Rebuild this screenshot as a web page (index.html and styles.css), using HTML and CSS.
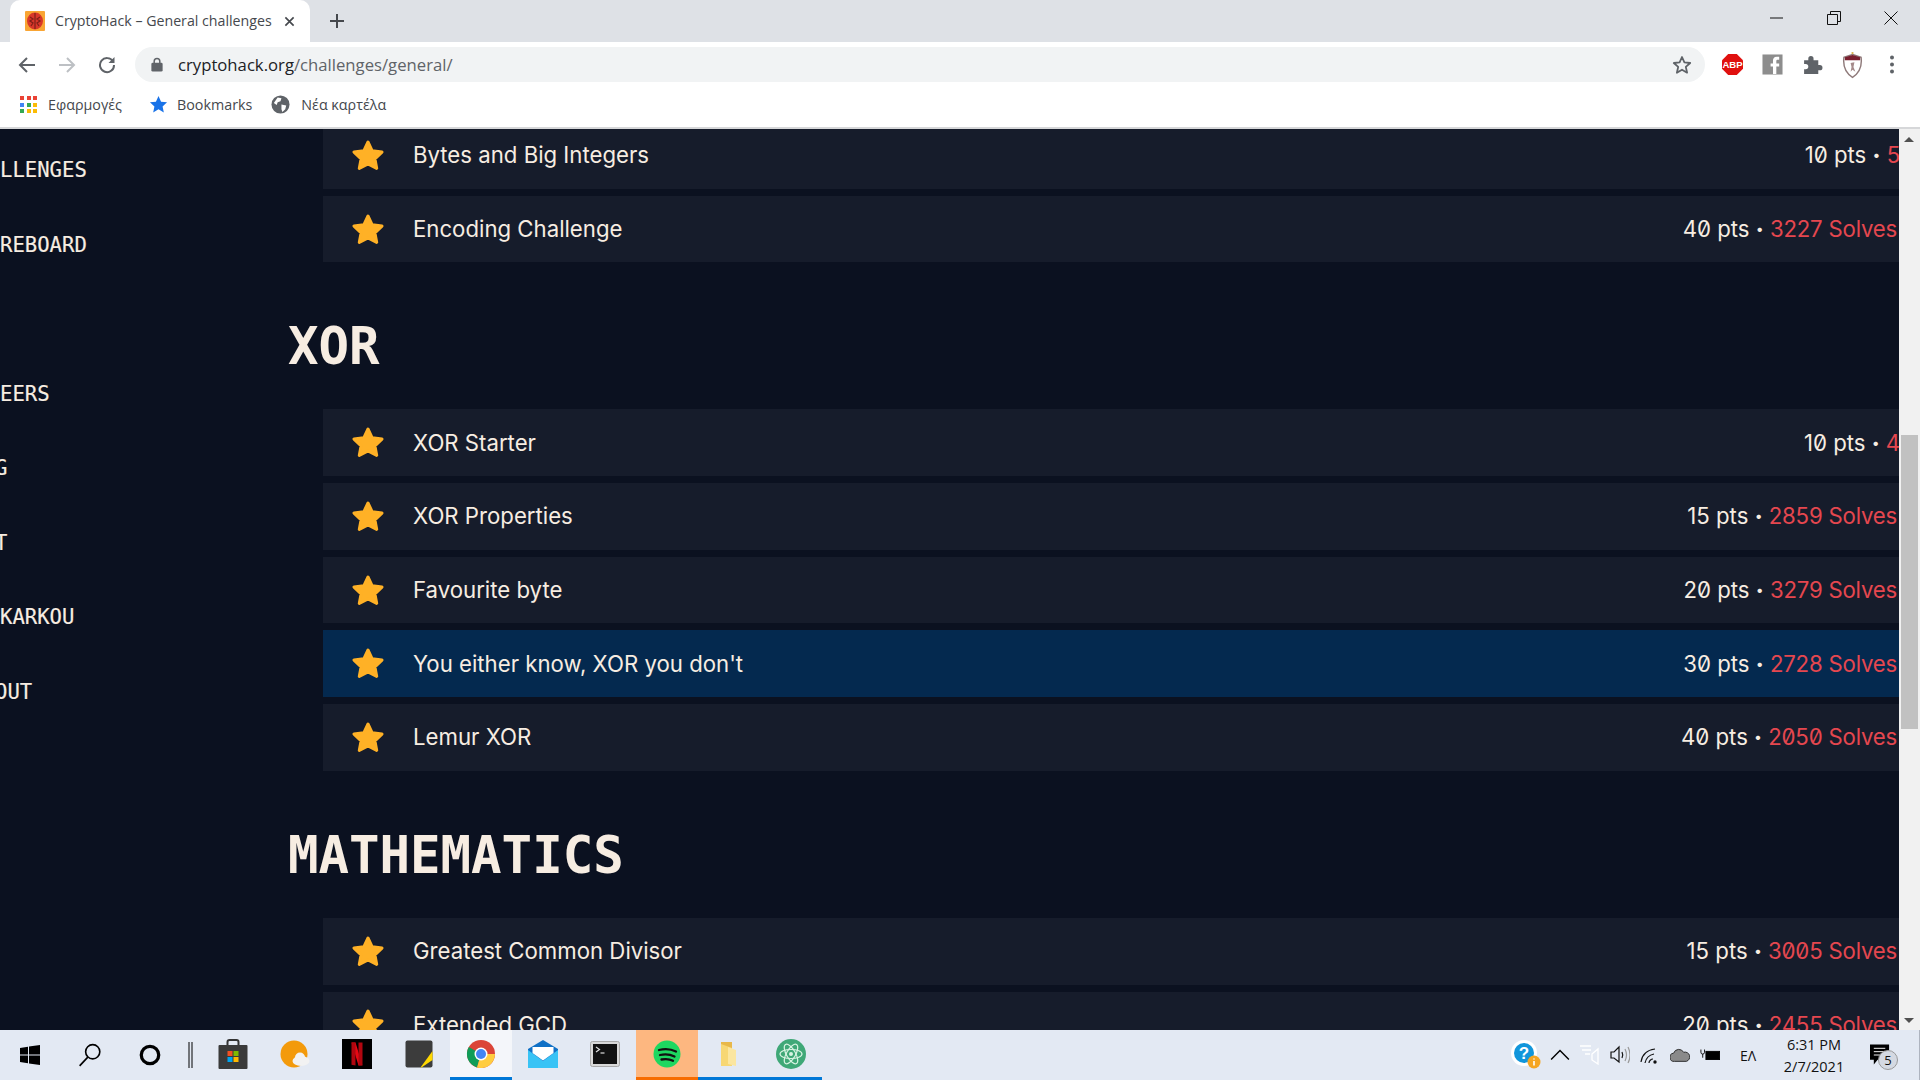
FILE: index.html
```html
<!DOCTYPE html>
<html lang="en">
<head>
    <meta charset="UTF-8">
    <meta name="viewport" content="width=device-width, initial-scale=1.0">
    <title>CryptoHack – General challenges</title>
    <link rel="stylesheet" href="styles.css">
</head>
<body>
    <svg class="defs" width="0" height="0">
        <symbol id="star" viewBox="0 0 32 30">
            <path d="M16 2 L20.2 10.8 L30 12.1 L22.9 18.8 L24.7 28.4 L16 23.8 L7.3 28.4 L9.1 18.8 L2 12.1 L11.8 10.8 Z" fill="#ffb126" stroke="#ffb126" stroke-width="3" stroke-linejoin="round"/>
        </symbol>
    </svg>

    <header class="browser">
        <div class="tabstrip">
            <div class="tab">
                <svg class="favicon" viewBox="0 0 20 20">
                    <rect width="20" height="20" rx="1" fill="#f9a534"/>
                    <ellipse cx="10" cy="10" rx="8" ry="8.5" fill="#d8372a"/>
                    <path d="M10 2v16M5 6l3 2-3 2 3 2-2 3M15 6l-3 2 3 2-3 2 2 3" stroke="#7d2018" stroke-width="1.2" fill="none"/>
                </svg>
                <span class="tab-title">CryptoHack – General challenges</span>
                <svg class="tab-close" viewBox="0 0 12 12"><path d="M1.5 1.5l9 9M10.5 1.5l-9 9" stroke="#45484d" stroke-width="1.8"/></svg>
            </div>
            <svg class="new-tab" viewBox="0 0 16 16"><path d="M8 1v14M1 8h14" stroke="#45484d" stroke-width="2"/></svg>
            <div class="window-btns">
                <svg viewBox="0 0 14 14"><path d="M0 7h13" stroke="#111" stroke-width="1"/></svg>
                <svg viewBox="0 0 14 14"><path d="M.5 3.5h10v10H.5zM3.5 3.5V.5h10v10h-3" fill="none" stroke="#111" stroke-width="1"/></svg>
                <svg viewBox="0 0 14 14"><path d="M.5.5l13 13M13.5.5l-13 13" stroke="#111" stroke-width="1"/></svg>
            </div>
        </div>

        <div class="toolbar">
            <svg class="nav-icon first" viewBox="0 0 18 18"><path d="M17 9H3M9 2L2 9l7 7" fill="none" stroke="#5f6368" stroke-width="2"/></svg>
            <svg class="nav-icon" viewBox="0 0 18 18"><path d="M1 9h14M9 2l7 7-7 7" fill="none" stroke="#bdc0c4" stroke-width="2"/></svg>
            <svg class="nav-icon" viewBox="0 0 18 18"><path d="M15 5.5A7 7 0 1 0 16 9" fill="none" stroke="#5f6368" stroke-width="2"/><path d="M16.5 1v6h-6z" fill="#5f6368"/></svg>
            <div class="omnibox">
                <svg class="lock" viewBox="0 0 12 16"><path d="M3 7V4.5a3 3 0 0 1 6 0V7" fill="none" stroke="#5f6368" stroke-width="1.6"/><rect y="6" width="12" height="9.5" rx="1.5" fill="#5f6368"/></svg>
                <span class="url"><b>cryptohack.org</b>/challenges/general/</span>
                <svg class="bookmark-star" viewBox="0 0 20 20"><path d="M10 2l2.4 5.4 5.8.6-4.4 3.9 1.3 5.8L10 14.7l-5.1 3 1.3-5.8L1.8 8l5.8-.6z" fill="none" stroke="#5f6368" stroke-width="1.8" stroke-linejoin="round"/></svg>
            </div>
            <div class="extensions">
                <svg viewBox="0 0 22 22">
                    <path d="M6.5 0h9L22 6.5v9L15.5 22h-9L0 15.5v-9z" fill="#e0100f"/>
                    <text x="11" y="15" class="abp">ABP</text>
                </svg>
                <svg viewBox="0 0 22 22">
                    <rect width="21" height="21" x=".5" y=".5" fill="#8d8d8d"/>
                    <path d="M15 21v-8h3v-3h-3V7.500c0-1 .5-1.500 1.500-1.500H18V3h-2.500C12.500 3 11.500 5 11.500 7v3H9v3h2.500v8z" fill="#fff"/>
                </svg>
                <svg viewBox="0 0 20 20"><path d="M2 6h4V4.500a2.500 2.500 0 0 1 5 0V6h4.500v4.500H17a2.500 2.500 0 0 1 0 5h-1.500V19H2v-4.500h1.500a2.500 2.500 0 0 0 0-5H2z" fill="#5f6368"/></svg>
                <svg class="shield" viewBox="0 0 22 28">
                    <path d="M11 3l9 3c1 8-1 16-9 21C3 22 1 14 2 6z" fill="#fff" stroke="#8f7a7a" stroke-width="1.500"/>
                    <path d="M3 6l8-2.500L19 6v3H3z" fill="#7a1f2e"/>
                    <path d="M9 12l4-1-1 5 2 5-3-2-2 2 1-5z" fill="#a58a8a"/>
                    <circle cx="11" cy="1.500" r="1.200" fill="#d9b24c"/>
                </svg>
                <svg class="menu" viewBox="0 0 6 20"><circle cx="3" cy="3" r="2" fill="#5f6368"/><circle cx="3" cy="10" r="2" fill="#5f6368"/><circle cx="3" cy="17" r="2" fill="#5f6368"/></svg>
            </div>
        </div>

        <div class="bookmarks">
            <span class="bm apps-bm">
                <span class="apps">
                    <i class="r"></i><i class="r"></i><i class="r"></i>
                    <i class="b"></i><i class="g"></i><i class="y"></i>
                    <i class="g"></i><i class="y"></i><i class="y"></i>
                </span>
                Εφαρμογές
            </span>
            <span class="bm stars-bm">
                <svg viewBox="0 0 20 20"><path d="M10 1l2.700 6 6.300.7-4.700 4.300 1.300 6.300L10 15.100l-5.600 3.200L5.700 12 1 7.700 7.300 7z" fill="#1a73e8"/></svg>
                Bookmarks
            </span>
            <span class="bm globe-bm">
                <svg viewBox="0 0 20 20"><circle cx="10" cy="10" r="9.500" fill="#5f6368"/><path d="M7 2.500l4 1-1 3-3 1-1 3-3-2zM11 10l5 1-1 4-3 3-1-3z" fill="#fff"/></svg>
                Νέα καρτέλα
            </span>
        </div>
    </header>

    <div class="viewport">
        <div class="page">
            <nav class="sidebar">
                <ul class="nav-group">
                    <li>LLENGES</li>
                    <li>REBOARD</li>
                </ul>
                <ul class="nav-group">
                    <li>EERS</li>
                    <li class="cut">G</li>
                    <li class="cut">T</li>
                    <li>KARKOU</li>
                    <li class="cut">OUT</li>
                </ul>
            </nav>

            <main class="content">
                <section class="category">
                    <ul class="challenges">
                        <li class="row">
                            <svg class="star"><use href="#star"/></svg>
                            <span class="name">Bytes and Big Integers</span>
                            <span class="stats clipped">10 pts <i class="dot">•</i> <em>5</em></span>
                        </li>
                        <li class="row">
                            <svg class="star"><use href="#star"/></svg>
                            <span class="name">Encoding Challenge</span>
                            <span class="stats">40 pts <i class="dot">•</i> <em>3227 Solves</em></span>
                        </li>
                    </ul>
                </section>

                <section class="category">
                    <h2>XOR</h2>
                    <ul class="challenges">
                        <li class="row">
                            <svg class="star"><use href="#star"/></svg>
                            <span class="name">XOR Starter</span>
                            <span class="stats clipped">10 pts <i class="dot">•</i> <em>4</em></span>
                        </li>
                        <li class="row">
                            <svg class="star"><use href="#star"/></svg>
                            <span class="name">XOR Properties</span>
                            <span class="stats">15 pts <i class="dot">•</i> <em>2859 Solves</em></span>
                        </li>
                        <li class="row">
                            <svg class="star"><use href="#star"/></svg>
                            <span class="name">Favourite byte</span>
                            <span class="stats">20 pts <i class="dot">•</i> <em>3279 Solves</em></span>
                        </li>
                        <li class="row active">
                            <svg class="star"><use href="#star"/></svg>
                            <span class="name">You either know, XOR you don't</span>
                            <span class="stats">30 pts <i class="dot">•</i> <em>2728 Solves</em></span>
                        </li>
                        <li class="row">
                            <svg class="star"><use href="#star"/></svg>
                            <span class="name">Lemur XOR</span>
                            <span class="stats">40 pts <i class="dot">•</i> <em>2050 Solves</em></span>
                        </li>
                    </ul>
                </section>

                <section class="category">
                    <h2>MATHEMATICS</h2>
                    <ul class="challenges">
                        <li class="row">
                            <svg class="star"><use href="#star"/></svg>
                            <span class="name">Greatest Common Divisor</span>
                            <span class="stats">15 pts <i class="dot">•</i> <em>3005 Solves</em></span>
                        </li>
                        <li class="row">
                            <svg class="star"><use href="#star"/></svg>
                            <span class="name">Extended GCD</span>
                            <span class="stats">20 pts <i class="dot">•</i> <em>2455 Solves</em></span>
                        </li>
                    </ul>
                </section>
            </main>
        </div>

        <div class="scrollbar">
            <span class="arrow up"></span>
            <span class="thumb"></span>
            <span class="arrow down"></span>
        </div>
    </div>

    <footer class="taskbar">
        <div class="task-left">
            <svg class="win" viewBox="0 0 20 20"><path d="M0 3l8-1.200V9.500H0zM9 1.600L20 0v9.500H9zM0 10.500h8v7.700L0 17zM9 10.500h11V20L9 18.400z" fill="#000"/></svg>
            <svg class="sys search" viewBox="0 0 22 22"><circle cx="13.500" cy="8" r="6.500" fill="none" stroke="#000" stroke-width="1.500"/><path d="M9 13L1.500 21" stroke="#000" stroke-width="1.500"/></svg>
            <svg class="sys cortana" viewBox="0 0 22 22"><circle cx="11" cy="11" r="8" fill="none" stroke="#000" stroke-width="3"/></svg>
            <svg class="sys divider" viewBox="0 0 6 26"><path d="M1 0v26M4 0v26" stroke="#000" stroke-width="1"/></svg>

            <span class="task"><svg viewBox="0 0 30 30">
                <path d="M9.500 7V3a2 2 0 0 1 2-2h7a2 2 0 0 1 2 2v4" fill="none" stroke="#333" stroke-width="2"/>
                <rect x=".5" y="6" width="29" height="24" rx="1" fill="#3a3a3a"/>
                <rect x="9.500" y="12" width="5" height="5" fill="#f25022"/><rect x="15.500" y="12" width="5" height="5" fill="#7fba00"/>
                <rect x="9.500" y="18" width="5" height="5" fill="#00a4ef"/><rect x="15.500" y="18" width="5" height="5" fill="#ffb900"/>
            </svg></span>
            <span class="task"><svg viewBox="0 0 30 30">
                <circle cx="14" cy="15" r="13.500" fill="#f39a0b"/>
                <ellipse cx="21" cy="22" rx="8.500" ry="5" fill="#f2f2f2"/><circle cx="20" cy="18.500" r="5" fill="#f2f2f2"/>
            </svg></span>
            <span class="task"><svg viewBox="0 0 30 30">
                <rect width="30" height="30" fill="#000"/>
                <path d="M9.500 3.500h4l7 23h-4z" fill="#e50914"/><path d="M9.500 3.500h4v23l-4-.8zM16.500 3.500h4v22.200l-4 .8z" fill="#b1060f"/>
            </svg></span>
            <span class="task"><svg viewBox="0 0 30 30">
                <rect x="1.500" y="1.500" width="27" height="27" rx="2" fill="#3c3c3c"/>
                <path d="M28.500 12v9l-11 7.500h-1z" fill="#ffd800"/>
            </svg></span>
            <span class="task open focused"><svg viewBox="0 0 30 30">
                <circle cx="15" cy="15" r="14" fill="#db4437"/>
                <path d="M15 15L2.800 8A14 14 0 0 0 11 28.400z" fill="#0f9d58"/>
                <path d="M15 15h14a14 14 0 0 1-18 13.400z" fill="#ffcd40"/>
                <circle cx="15" cy="15" r="6.500" fill="#fff"/><circle cx="15" cy="15" r="5" fill="#4285f4"/>
            </svg></span>
            <span class="task"><svg viewBox="0 0 30 30">
                <path d="M0 10L15 1l15 9v19H0z" fill="#0f70c6"/>
                <path d="M0 11l15 11 15-11v18H0z" fill="#38c3f5"/>
                <path d="M4.500 8h21v6L15 21.500 4.500 14z" fill="#fff"/>
            </svg></span>
            <span class="task"><svg viewBox="0 0 30 30">
                <rect x=".5" y="2.500" width="29" height="25" rx="2" fill="#d8d8d8" stroke="#a8a8a8"/>
                <rect x="3" y="5" width="24" height="20" fill="#111"/>
                <path d="M6 8l3.500 2.500L6 13" fill="none" stroke="#ddd" stroke-width="1.200"/><path d="M10.500 14h4" stroke="#ddd" stroke-width="1.200"/>
            </svg></span>
            <span class="task open spotify"><svg viewBox="0 0 30 30">
                <circle cx="15" cy="15" r="13.500" fill="#1ed760"/>
                <path d="M7 11c6-1.500 12-1 17 1.500M8 16c5-1.200 10-.8 14.500 1.500M9.500 20.500c4-.8 8-.6 11.500 1.200" fill="none" stroke="#111" stroke-width="2.300" stroke-linecap="round"/>
            </svg></span>
            <span class="task open"><svg viewBox="0 0 30 30">
                <path d="M7 3h11v24H7z" fill="#f7d774"/><path d="M7 3h11v6L7 5z" fill="#e8b84a"/><path d="M14 8l8 3v16l-8-2z" fill="#fbe6a0"/>
            </svg></span>
            <span class="task open"><svg viewBox="0 0 30 30">
                <circle cx="15" cy="15" r="15" fill="#3fa877"/>
                <ellipse cx="15" cy="15" rx="11" ry="4.500" fill="none" stroke="#d8f3e2" stroke-width="1.200" transform="rotate(60 15 15)"/>
                <ellipse cx="15" cy="15" rx="11" ry="4.500" fill="none" stroke="#d8f3e2" stroke-width="1.200" transform="rotate(-60 15 15)"/>
                <ellipse cx="15" cy="15" rx="11" ry="4.500" fill="none" stroke="#d8f3e2" stroke-width="1.200"/>
                <circle cx="15" cy="15" r="2" fill="#d8f3e2"/>
            </svg></span>
        </div>

        <div class="tray">
            <svg class="tray-help" viewBox="0 0 30 30">
                <circle cx="13" cy="13" r="13" fill="#fff"/><circle cx="13" cy="13" r="10" fill="#1296db"/>
                <text x="13" y="19" class="help-q">?</text>
                <circle cx="23" cy="22" r="6.500" fill="#f5a623"/><path d="M23 21v4.500M23 18.500v1" stroke="#fff" stroke-width="1.600"/>
            </svg>
            <svg class="tray-icon" viewBox="0 0 18 10"><path d="M1 9l8-8 8 8" fill="none" stroke="#000" stroke-width="1.300"/></svg>
            <svg class="tray-icon" viewBox="0 0 20 20"><path d="M0 1h11M2 5h9M5 9h5M12 9l6-5v15l-6-4z" fill="none" stroke="#fff" stroke-width="1.300"/></svg>
            <svg class="tray-icon" viewBox="0 0 20 20"><path d="M1 7h3l5-5v15l-5-4H1z" fill="none" stroke="#111" stroke-width="1.200"/><path d="M12 7c1 2 1 4 0 6" fill="none" stroke="#111" stroke-width="1.200"/><path d="M15 4c2 4 2 8 0 12M18 2c2.500 5 2.500 11 0 16" fill="none" stroke="#999" stroke-width="1.200"/></svg>
            <svg class="tray-icon" viewBox="0 0 20 20"><path d="M1 17c1-7 6-12 14-13M5 18c1-5 4-8 9-9M9 18c0-2 2-4 4-4" fill="none" stroke="#111" stroke-width="1.200"/><circle cx="15" cy="17" r="1.700" fill="#111"/></svg>
            <svg class="tray-icon" viewBox="0 0 22 16"><path d="M5 15a4.500 4.500 0 0 1-1-9 6 6 0 0 1 11-1 5 5 0 0 1 3 10z" fill="#8a8a8a" stroke="#222" stroke-width="1"/></svg>
            <svg class="tray-icon" viewBox="0 0 22 14"><path d="M1 1v3a2 2 0 0 0 4 0V1M3 6v4" fill="none" stroke="#000" stroke-width="1"/><rect x="6.500" y="3" width="15" height="9" fill="#000" stroke="#000"/></svg>
            <span class="lang">ΕΛ</span>
            <div class="clock"><span>6:31 PM</span><span>2/7/2021</span></div>
            <div class="notify">
                <svg viewBox="0 0 22 22"><path d="M0 0h20v16H8l-4 5v-5H0z" fill="#000"/><path d="M4 4h12M4 7.500h12M4 11h12" stroke="#fff" stroke-width="1"/></svg>
                <span class="badge">5</span>
            </div>
        </div>
    </footer>
</body>
</html>
```

FILE: styles.css
```css
* {
    box-sizing: border-box;
}

html, body {
    margin: 0;
    height: 1080px;
    overflow: hidden;
}

body {
    display: flex;
    flex-direction: column;
    background-color: #0b1120;
    font-family: "Open Sans", "Noto Sans", sans-serif;
}

ul {
    list-style: none;
    margin: 0;
    padding: 0;
}

.defs {
    position: absolute;
}

/* browser window */
.browser {
    flex: none;
    height: 129px;
    background-color: #fff;
    border-bottom: 2px solid #d6d7d9;
}

.tabstrip {
    height: 42px;
    display: flex;
    align-items: center;
    background-color: #dee1e6;
}

.tab {
    width: 300px;
    height: 42px;
    margin-left: 10px;
    padding-left: 15px;
    display: flex;
    align-items: center;
    background-color: #fff;
    border-radius: 10px 10px 0 0;
}

.favicon {
    width: 20px;
    height: 20px;
}

.tab-title {
    margin-left: 10px;
    width: 229px;
    margin-top: -2px;
    font-size: 14.2px;
    color: #45484d;
    white-space: nowrap;
}

.tab-close {
    width: 11px;
    height: 11px;
}

.new-tab {
    width: 16px;
    height: 16px;
    margin-left: 19px;
}

.window-btns {
    margin-left: auto;
    display: flex;
    align-items: center;
    gap: 43px;
    padding-right: 22px;
    padding-bottom: 6px;
}

.window-btns svg {
    width: 14px;
    height: 14px;
}

.toolbar {
    height: 42px;
    padding-top: 3px;
    display: flex;
    align-items: center;
}

.nav-icon {
    width: 18px;
    height: 18px;
    margin-left: 22px;
}

.nav-icon.first {
    margin-left: 18px;
}

.omnibox {
    width: 1570px;
    height: 35px;
    margin-left: 19px;
    padding: 0 13px 0 16px;
    display: flex;
    align-items: center;
    background-color: #f1f3f4;
    border-radius: 18px;
}

.lock {
    width: 12px;
    height: 15px;
}

.url {
    margin-left: 15px;
    font-size: 16.7px;
    color: #5f6368;
}

.url b {
    font-weight: 400;
    color: #202124;
}

.bookmark-star {
    width: 20px;
    height: 20px;
    margin-left: auto;
}

.extensions {
    margin-left: 17px;
    display: flex;
    align-items: center;
    gap: 19px;
}

.extensions svg {
    width: 21px;
    height: 21px;
}

.extensions .shield {
    height: 28px;
}

.extensions .menu {
    width: 6px;
    margin-left: 7px;
}

.abp {
    font-family: "Liberation Sans", sans-serif;
    font-weight: 700;
    font-size: 10px;
    fill: #fff;
    text-anchor: middle;
}

.bookmarks {
    height: 41px;
    padding-left: 20px;
    display: flex;
    align-items: center;
    font-size: 14.3px;
    color: #45484d;
}

.bm {
    display: flex;
    align-items: center;
}

.bm svg {
    width: 19px;
    height: 19px;
}

.apps-bm {
    gap: 11px;
}

.stars-bm {
    margin-left: 27px;
    gap: 9px;
}

.globe-bm {
    margin-left: 19px;
    gap: 11px;
}

.apps {
    width: 17px;
    height: 17px;
    display: grid;
    grid-template-columns: repeat(3, 4px);
    grid-auto-rows: 4px;
    gap: 2.5px;
}

.apps .r { background-color: #ea4335; }
.apps .g { background-color: #34a853; }
.apps .b { background-color: #4285f4; }
.apps .y { background-color: #fbbc05; }

/* page, scrolled sideways so the nav is cut off */
.viewport {
    flex: 1;
    min-height: 0;
    display: flex;
    overflow: hidden;
}

.page {
    flex: 1;
    min-width: 0;
    display: flex;
    overflow: hidden;
}

.sidebar {
    flex: none;
    width: 288px;
    padding-top: 4px;
    font-family: "DejaVu Sans Mono", monospace;
    font-size: 20.6px;
    -webkit-text-stroke: 0.15px #f7ede2;
    color: #f7ede2;
}

.nav-group + .nav-group {
    margin-top: 74.5px;
}

.nav-group li {
    height: 74.5px;
    line-height: 74.5px;
}

.nav-group .cut {
    margin-left: -5px;
}

.content {
    flex: 1;
    min-width: 0;
    margin-top: -7px;
}

h2 {
    margin: 55px 0 32px;
    font-family: "DejaVu Sans Mono", monospace;
    font-weight: 700;
    font-size: 50.7px;
    line-height: 60px;
    color: #f7ede2;
}

.challenges {
    margin-left: 35px;
    display: flex;
    flex-direction: column;
    gap: 7px;
}

.row {
    flex: none;
    height: 66.7px;
    padding-right: 2px;
    padding-bottom: 1px;
    display: flex;
    align-items: center;
    background-color: #161c2b;
    overflow: hidden;
    font-family: "Inter", sans-serif;
    font-size: 22.2px;
    color: #f7ede2;
    font-variant-numeric: slashed-zero;
}

.row.active {
    background-color: #04294f;
}

.star {
    flex: none;
    width: 32px;
    height: 30px;
    margin-left: 29px;
    margin-right: 29px;
}

.stats {
    margin-left: auto;
    white-space: nowrap;
}

.stats em {
    font-style: normal;
    letter-spacing: -0.2px;
    color: #e5474f;
}

.dot {
    font-style: normal;
    font-size: 14px;
    vertical-align: 0.2em;
}

.stats.clipped {
    margin-right: -3px;
}

/* scrollbar */
.scrollbar {
    flex: none;
    width: 21px;
    position: relative;
    background-color: #f1f1f1;
}

.thumb {
    position: absolute;
    top: 306px;
    left: 2px;
    width: 17px;
    height: 294px;
    background-color: #c1c1c1;
}

.arrow {
    position: absolute;
    left: 5px;
    border-left: 5px solid transparent;
    border-right: 5px solid transparent;
}

.arrow.up {
    top: 8px;
    border-bottom: 5px solid #505050;
}

.arrow.down {
    bottom: 7px;
    border-top: 5px solid #505050;
}

/* windows taskbar */
.taskbar {
    flex: none;
    height: 50px;
    display: flex;
    justify-content: space-between;
    background-color: #e3e9f3;
    color: #111;
}

.task-left {
    display: flex;
    align-items: center;
}

.win {
    width: 20px;
    height: 20px;
    margin-left: 20px;
}

.sys {
    height: 24px;
    width: 24px;
}

.search {
    margin-left: 38px;
}

.cortana {
    margin-left: 36px;
}

.divider {
    margin-left: 26px;
    width: 6px;
    height: 26px;
}

.task {
    width: 62px;
    height: 50px;
    display: flex;
    align-items: center;
    justify-content: center;
    border-bottom: 3px solid transparent;
}

.divider + .task {
    margin-left: 8px;
}

.task svg {
    width: 30px;
    height: 30px;
}

.task.open {
    border-bottom-color: #0078d7;
}

.task.focused {
    background-color: #f4f6fa;
}

.task.spotify {
    background-color: #fdb780;
    border-bottom-color: #f76c00;
}

.tray {
    display: flex;
    align-items: center;
    padding-right: 4px;
    border-right: 1px solid #aeb4bf;
}

.tray-help {
    width: 30px;
    height: 30px;
    margin-right: 9px;
}

.help-q {
    font-family: "Liberation Sans", sans-serif;
    font-weight: 700;
    font-size: 17px;
    fill: #fff;
    text-anchor: middle;
}

.tray-icon {
    width: 20px;
    height: 20px;
    margin-right: 10px;
}

.lang {
    margin-left: 10px;
    width: 30px;
    font-size: 14px;
}

.clock {
    width: 88px;
    display: flex;
    flex-direction: column;
    align-items: center;
    gap: 5px;
    font-size: 14.5px;
    line-height: 17px;
}

.notify {
    position: relative;
    width: 36px;
    height: 40px;
    margin-left: 11px;
    margin-right: 10px;
    display: flex;
    align-items: center;
}

.notify svg {
    width: 21px;
    height: 22px;
    margin-left: 1px;
}

.badge {
    position: absolute;
    top: 15px;
    left: 9px;
    width: 20px;
    height: 20px;
    border-radius: 50%;
    border: 1px solid #999;
    background-color: #d4d9e2;
    font-size: 13px;
    line-height: 18px;
    text-align: center;
}
```
